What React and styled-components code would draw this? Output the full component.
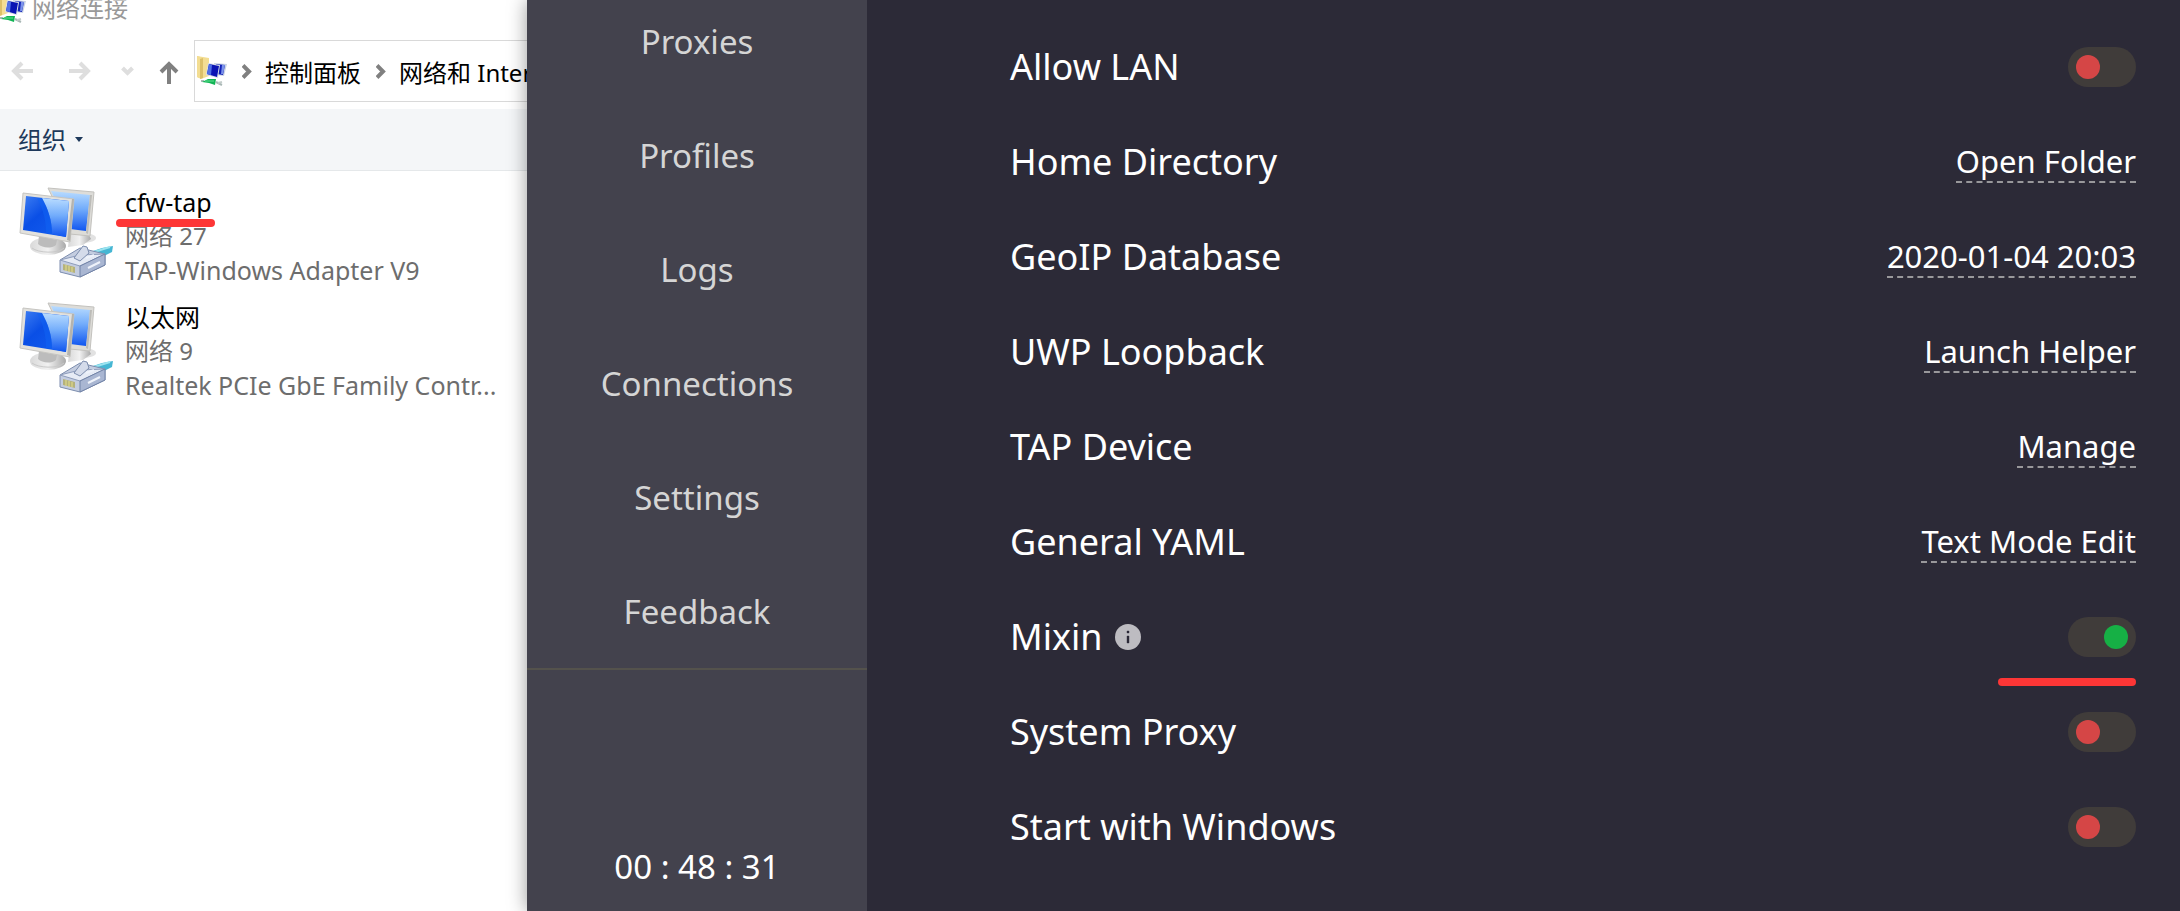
import { useState } from 'react'
import styled, { createGlobalStyle } from 'styled-components'

const GlobalStyle = createGlobalStyle`
    * {
        box-sizing: border-box;
    }

    body {
        margin: 0;
        background: #fff;
        font-family: "Noto Sans", "Noto Sans CJK SC", sans-serif;
    }

    button {
        font-family: inherit;
        border: 0;
        padding: 0;
        background: none;
    }
`

const Desktop = styled.div`
    display: flex;
    min-height: 100vh;
    overflow: hidden;
`

/* file explorer window */

const Explorer = styled.section`
    flex: 0 0 527px;
    min-width: 0;
    overflow: hidden;
    font-size: 24px;
    color: #000;
    background: #fff;
`

const TitleBar = styled.header`
    display: flex;
    align-items: center;
    gap: 6px;
    height: 16px;
    margin-bottom: 24px;
    line-height: 14px;
    color: #999;

    svg {
        flex: none;
    }
`

const AddressRow = styled.div`
    display: flex;
    align-items: center;
    padding-left: 8px;
    margin-bottom: 7px;
`

const NavButton = styled.button`
    display: flex;
    width: ${props => props.$width}px;
    color: ${props => (props.$dim ? '#dedede' : '#808080')};
`

const AddressBar = styled.nav`
    display: flex;
    align-items: center;
    flex: 1;
    height: 62px;
    padding-left: 1px;
    border: 1px solid #d9d9d9;
    border-right: 0;
    white-space: nowrap;
    overflow: hidden;

    a {
        color: #000;
        text-decoration: none;
    }

    svg {
        flex: none;
    }
`

const Separator = styled.svg`
    margin: 0 13px 0 15px;
    color: #808080;
`

const CommandBar = styled.div`
    display: flex;
    align-items: center;
    height: 62px;
    padding-left: 18px;
    background: #f4f6f8;
    border-bottom: 1px solid #e5e8ea;

    button {
        display: flex;
        align-items: center;
        gap: 9px;
        font-size: 24px;
        line-height: 34px;
        color: #1e395b;
    }
`

const AdapterList = styled.ul`
    display: flex;
    flex-direction: column;
    gap: 13px;
    margin: 0;
    padding: 14px 18px;
    list-style: none;
`

const Adapter = styled.li`
    display: flex;
    gap: 11px;
    height: 102px;

    svg {
        flex: none;
    }
`

const AdapterLine = styled.div`
    position: relative;
    line-height: 34px;
    white-space: nowrap;
    color: #6d6d6d;
`

const AdapterName = styled(AdapterLine)`
    font-size: 25px;
    color: #000;
`

const AdapterDevice = styled(AdapterLine)`
    font-size: 25px;
`

/* marker strokes that lie over the text */
const Mark = styled.span`
    position: absolute;
    z-index: 1;
    height: 8px;
    border-radius: 4px;
    background: #fd3636;
`

const NameMark = styled(Mark)`
    left: -9px;
    bottom: -8px;
    width: 99px;
`

const RowMark = styled(Mark)`
    right: 0;
    bottom: -2px;
    width: 138px;
`

/* proxy client window */

const Client = styled.div`
    position: relative;
    display: flex;
    flex: 1;
    box-shadow: 0 0 18px rgba(0, 0, 0, 0.4);
`

const Sidebar = styled.aside`
    display: flex;
    flex: 0 0 340px;
    flex-direction: column;
    justify-content: space-between;
    background: #43424d;
    font-size: 33px;
    line-height: 46px;
    text-align: center;
`

const Menu = styled.nav`
    display: flex;
    flex-direction: column;
    gap: 68px;
    padding: 19px 0 33px;
    border-bottom: 2px solid #54524c;

    a {
        color: #d5d5d5;
        text-decoration: none;
    }
`

const Timer = styled.div`
    padding-bottom: 21px;
    color: #fff;
`

const Settings = styled.main`
    flex: 1;
    padding: 19px 44px 19px 143px;
    background: #2c2a37;
    color: #fff;
`

const Row = styled.div`
    position: relative;
    display: flex;
    align-items: center;
    justify-content: space-between;
    height: 95px;
`

const Label = styled.label`
    display: flex;
    align-items: center;
    gap: 12px;
    font-size: 36px;
    line-height: 48px;
`

const Action = styled.button`
    border-bottom: 2px dashed #99989b;
    font-size: 31px;
    line-height: 40px;
    color: #fff;
    cursor: pointer;
`

const Toggle = styled.input`
    appearance: none;
    display: flex;
    justify-content: flex-start;
    width: 68px;
    height: 40px;
    margin: 0;
    padding: 8px;
    border-radius: 20px;
    background: #403c3a;
    cursor: pointer;

    &::before {
        content: "";
        width: 24px;
        height: 24px;
        border-radius: 50%;
        background: #d54646;
    }

    &:checked {
        justify-content: flex-end;
    }

    &:checked::before {
        background: #16b045;
    }
`

const NetworkIcon = ({ cut = 0 }) => (
    <svg width={31 - cut} height="30" viewBox={`${cut} 0 ${31 - cut} 30`} aria-hidden="true">
        <path d="M1 0l3 1v21l-3-1z" fill="#e9d27a" />
        <path d="M1 0l12 2v18l-8 3-4-2z" fill="#f3dd92" />
        <path d="M4 3l3-1v20l-3 1z" fill="#dcc069" />
        <path d="M18 7l13 1-3 12-8-1z" fill="#c9d3e4" />
        <path d="M20 8l9 1-2 10-6-1z" fill="#1323b8" />
        <path d="M26 9l3 0-2 9-2 0z" fill="#7c93ea" />
        <path d="M12 7l12 2-2 13-12-3z" fill="#d6dde6" />
        <path d="M13 8l10 2-2 11-10-3z" fill="#0a14b4" />
        <path d="M13 8l3 1-1 10-4-1z" fill="#4e6fe6" />
        <path d="M5 25l3 0M20 26l6 3" fill="none" stroke="#a9b7b5" strokeWidth="2" />
        <path d="M22 27l4-1" stroke="#c3cdcb" strokeWidth="2" />
        <path d="M6 26l6-3 8 0-1 6-6-2z" fill="#12b455" />
        <path d="M9 25l9 0" stroke="#5fe08f" />
    </svg>
)

const AdapterIcon = () => (
    <svg width="96" height="96" viewBox="0 0 96 96" aria-hidden="true">
        <defs>
            <linearGradient id="screenDark" x1="0" y1="0" x2="1" y2="1">
                <stop offset="0" stopColor="#3d7df2" />
                <stop offset="0.4" stopColor="#0a4fe6" />
                <stop offset="1" stopColor="#1560f0" />
            </linearGradient>
            <linearGradient id="screenLight" x1="0" y1="0" x2="0" y2="1">
                <stop offset="0" stopColor="#b9dcff" />
                <stop offset="0.45" stopColor="#72acfb" />
                <stop offset="1" stopColor="#0f55f0" />
            </linearGradient>
            <linearGradient id="stand" x1="0" y1="0" x2="1" y2="0">
                <stop offset="0" stopColor="#d9d9d9" />
                <stop offset="0.5" stopColor="#f1f1f1" />
                <stop offset="1" stopColor="#a9a9a9" />
            </linearGradient>
        </defs>
        <ellipse cx="65" cy="53" rx="13" ry="5" fill="#e2e2e2" />
        <path d="M52 45l18 3 3 6-8 6-15 2z" fill="url(#stand)" />
        <path d="M30 3l46 4-4 44-20-2z" fill="#dddcd8" stroke="#c3c2be" />
        <path d="M33 6l39 4-4 36-16-2z" fill="url(#screenLight)" />
        <path d="M72 10l2 0-4 39-2-1z" fill="#bdbcb8" />
        <ellipse cx="30" cy="61" rx="18" ry="9" fill="url(#stand)" />
        <path d="M21 51l18 4-1 5c-5 4-14 3-18-1z" fill="#bcbcbc" />
        <path d="M14 63c6 5 26 6 32 0" fill="none" stroke="#c9c9c9" />
        <path d="M5 8l51 6-4 43-50-9z" fill="#e2e1dd" stroke="#c6c5c1" />
        <path d="M54 14l2 0-4 42-3-1z" fill="#b4b3ae" />
        <path d="M8 11l43 5-3 36-43-7z" fill="url(#screenDark)" />
        <path d="M24 13l27 3-3 36-14-3c0-14-4-25-10-36z" fill="url(#screenLight)" />
        <path d="M24 13c6 11 10 22 10 36l-6-1c0-13-3-24-9-35z" fill="#0f63f4" opacity="0.5" />
        <path d="M72 67l12-4 11-2-1 6-8 4-10 2z" fill="#45b6d3" />
        <path d="M76 67l16-5" stroke="#9be3ef" strokeWidth="2" />
        <path d="M42 75l20-12 25 6v11l-25 12-20-5z" fill="#c4cde0" stroke="#7c8dae" />
        <path d="M42 75l20-5 25-1-25 12z" fill="#e6ebf5" stroke="#8d9cbb" />
        <path d="M62 81v11l25-12v-11z" fill="#a9b6d2" stroke="#7384a8" />
        <path d="M56 73l9-12 4 1 2 6-9 8z" fill="#d4dbea" stroke="#7c8dae" />
        <path d="M68 73l8-3M70 83l12-6" stroke="#eef2fa" strokeWidth="2" />
        <path d="M45 79l12 3v6l-12-3z" fill="#b5b27c" />
        <path d="M48 80v6M51 81v6M54 82v5" stroke="#e6e08b" />
    </svg>
)

const ArrowIcon = ({ d, width = 28, height = 26 }) => (
    <svg width={width} height={height} viewBox={`0 0 ${width} ${height}`} fill="none" stroke="currentColor" strokeWidth="4" aria-hidden="true">
        <path d={d} />
    </svg>
)

const Chevron = () => (
    <Separator width="10" height="16" viewBox="0 0 10 16" fill="none" stroke="currentColor" strokeWidth="4" aria-hidden="true">
        <path d="M1 2.5l6 6-6 6" />
    </Separator>
)

const InfoIcon = () => (
    <svg width="26" height="26" viewBox="0 0 26 26" aria-hidden="true">
        <circle cx="13" cy="13" r="13" fill="#bdbcc1" />
        <path d="M12 7h2v2h-2zM12 12h2v7h-2z" fill="#2c2a37" stroke="#2c2a37" strokeWidth="0.4" />
    </svg>
)

const menu = ['Proxies', 'Profiles', 'Logs', 'Connections', 'Settings', 'Feedback']

const adapters = [
    { name: 'cfw-tap', network: '网络 27', device: 'TAP-Windows Adapter V9', marked: true },
    { name: '以太网', network: '网络 9', device: 'Realtek PCIe GbE Family Contr...' },
]

const rows = [
    { id: 'lan', label: 'Allow LAN' },
    { id: 'home', label: 'Home Directory', action: 'Open Folder' },
    { id: 'geoip', label: 'GeoIP Database', action: '2020-01-04 20:03' },
    { id: 'uwp', label: 'UWP Loopback', action: 'Launch Helper' },
    { id: 'tap', label: 'TAP Device', action: 'Manage' },
    { id: 'yaml', label: 'General YAML', action: 'Text Mode Edit' },
    { id: 'mixin', label: 'Mixin', info: true, marked: true },
    { id: 'system', label: 'System Proxy' },
    { id: 'startup', label: 'Start with Windows' },
]

const ExplorerWindow = () => (
    <Explorer>
        <TitleBar>
            <NetworkIcon cut={5} />
            <span>网络连接</span>
        </TitleBar>
        <AddressRow>
            <NavButton $width={58} $dim aria-label="Back">
                <ArrowIcon d="M25 13H6M14 5l-8 8 8 8" />
            </NavButton>
            <NavButton $width={53} $dim aria-label="Forward">
                <ArrowIcon d="M3 13h19M14 5l8 8-8 8" />
            </NavButton>
            <NavButton $width={38} $dim aria-label="Recent locations">
                <ArrowIcon d="M3.5 7l5 5 5-5" width={16} height={20} />
            </NavButton>
            <NavButton $width={37} aria-label="Up">
                <ArrowIcon d="M12 26V6M4 14l8-8 8 8" width={24} />
            </NavButton>
            <AddressBar>
                <NetworkIcon />
                <Chevron />
                <a href="#control-panel">控制面板</a>
                <Chevron />
                <a href="#network">网络和 Inter</a>
            </AddressBar>
        </AddressRow>
        <CommandBar>
            <button>
                组织
                <svg width="8" height="5" viewBox="0 0 8 5" aria-hidden="true">
                    <path d="M0 0h8l-4 5z" fill="#1e395b" />
                </svg>
            </button>
        </CommandBar>
        <AdapterList>
            {adapters.map(adapter => (
                <Adapter key={adapter.name}>
                    <AdapterIcon />
                    <div>
                        <AdapterName>
                            {adapter.name}
                            {adapter.marked && <NameMark />}
                        </AdapterName>
                        <AdapterLine>{adapter.network}</AdapterLine>
                        <AdapterDevice>{adapter.device}</AdapterDevice>
                    </div>
                </Adapter>
            ))}
        </AdapterList>
    </Explorer>
)

const App = () => {
    const [enabled, setEnabled] = useState({ mixin: true })

    const toggle = id => setEnabled({ ...enabled, [id]: !enabled[id] })

    return (
        <Desktop>
            <GlobalStyle />
            <ExplorerWindow />
            <Client>
                <Sidebar>
                    <Menu>
                        {menu.map(item => (
                            <a key={item} href={`#${item.toLowerCase()}`}>{item}</a>
                        ))}
                    </Menu>
                    <Timer>00 : 48 : 31</Timer>
                </Sidebar>
                <Settings>
                    {rows.map(row => (
                        <Row key={row.id}>
                            <Label htmlFor={row.id}>
                                {row.label}
                                {row.info && <InfoIcon />}
                            </Label>
                            {row.action
                                ? <Action id={row.id}>{row.action}</Action>
                                : <Toggle type="checkbox" id={row.id} checked={!!enabled[row.id]} onChange={() => toggle(row.id)} />}
                            {row.marked && <RowMark />}
                        </Row>
                    ))}
                </Settings>
            </Client>
        </Desktop>
    )
}

export default App
